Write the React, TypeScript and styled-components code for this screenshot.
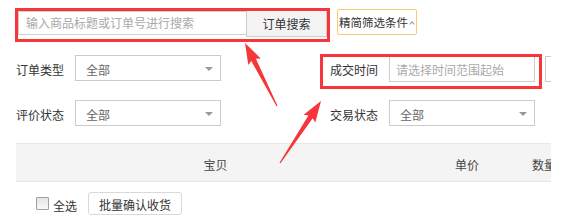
import React from "react";
import styled, { createGlobalStyle } from "styled-components";

const GlobalStyle = createGlobalStyle`
  html, body { margin: 0; padding: 0; background: #fff; }
  body {
    font-family: "Noto Sans CJK SC", "Noto Sans", "Liberation Sans", sans-serif;
    font-size: 12px;
    color: #333;
  }
  * { box-sizing: border-box; }
`;

const Page = styled.div`
  position: relative;
  width: 562px;
  height: 217px;
  overflow: hidden;
`;

const Content = styled.div`
  width: 551px;
  height: 217px;
  overflow: hidden;
`;

const SearchBar = styled.div`
  display: flex;
  align-items: flex-start;
  padding: 9px 0 0 18px;
`;

const SearchInput = styled.div`
  width: 228px;
  height: 24px;
  margin-top: 2px;
  border: 1px solid #cfcfcf;
  border-right: none;
  padding-left: 7px;
  display: flex;
  align-items: center;
  color: #a9a9a9;
  line-height: 1;
  white-space: nowrap;
`;

const SearchButton = styled.div`
  width: 81px;
  height: 28px;
  background: #f3f3f3;
  border: 1px solid #cccccc;
  display: flex;
  align-items: center;
  justify-content: center;
  color: #333;
  padding-top: 1px;
  white-space: nowrap;
`;

const ToggleButton = styled.div`
  margin-left: 10px;
  width: 80px;
  height: 26px;
  border: 1px solid #f7c976;
  border-radius: 2px;
  display: flex;
  align-items: center;
  padding-left: 1px;
  color: #333;
  white-space: nowrap;
  font-size: 11.5px;
  overflow: hidden;
`;

const Caret = styled.span`
  display: inline-block;
  flex-shrink: 0;
  width: 4px;
  height: 4px;
  border-left: 1px solid #999;
  border-top: 1px solid #999;
  transform: rotate(45deg);
  margin: 4px 0 0 2px;
`;

const FilterGrid = styled.div`
  display: grid;
  grid-template-columns: 314px auto;
  row-gap: 19px;
  padding-left: 16px;
  margin-top: 18px;
`;

const Field = styled.div`
  display: flex;
  align-items: center;
  height: 26px;
  white-space: nowrap;
`;

const Label = styled.div`
  width: 59px;
  color: #333;
  padding-top: 3px;
  flex-shrink: 0;
`;

const Select = styled.div`
  position: relative;
  width: 146px;
  height: 26px;
  border: 1px solid #cccccc;
  padding-left: 10px;
  display: flex;
  align-items: center;
  color: #666;
  padding-top: 3px;
  flex-shrink: 0;
`;

const Arrow = styled.span`
  position: absolute;
  right: 7px;
  top: 11px;
  width: 0;
  height: 0;
  border-left: 4px solid transparent;
  border-right: 4px solid transparent;
  border-top: 4px solid #999;
`;

const DateInput = styled.div<{ $offset?: number }>`
  width: 146px;
  height: 26px;
  margin-top: ${(p) => p.$offset ?? 0}px;
  border: 1px solid #cccccc;
  padding-left: 6px;
  display: flex;
  align-items: center;
  color: #aaa;
  flex-shrink: 0;
`;

const Dash = styled.span`
  width: 10px;
  text-align: center;
  color: #bbb;
  font-size: 10px;
`;

const TableHeader = styled.div`
  display: grid;
  grid-template-columns: 399px 104px 60px;
  margin: 17px 0 0 16px;
  width: 560px;
  height: 39px;
  background: #f4f4f4;
  border-top: 1px solid #e9e9e9;
  border-bottom: 1px solid #e6e6e6;
`;

const HeaderCell = styled.div<{ $align?: string }>`
  display: flex;
  align-items: center;
  justify-content: ${(p) => p.$align ?? "center"};
  padding-top: 4px;
  color: #444;
  white-space: nowrap;
  padding-left: ${(p) => (p.$align === "flex-start" ? "13px" : "0")};
`;

const BatchBar = styled.div`
  display: flex;
  align-items: center;
  margin-top: 10px;
  padding-left: 36px;
`;

const Checkbox = styled.span`
  width: 13px;
  height: 13px;
  border: 1px solid #a0a0a0;
  background: linear-gradient(#e4e4e4, #f8f8f8);
  border-radius: 1px;
`;

const CheckLabel = styled.span`
  margin-left: 4px;
  color: #333;
  padding-top: 3px;
`;

const BatchButton = styled.div`
  margin-left: 11px;
  width: 94px;
  height: 23px;
  border: 1px solid #d9d9d9;
  border-radius: 3px;
  background: #fff;
  display: flex;
  align-items: center;
  justify-content: center;
  color: #333;
  padding-top: 1px;
  white-space: nowrap;
`;

const Overlay = styled.svg`
  position: absolute;
  left: 0;
  top: 0;
  pointer-events: none;
`;

function arrowPoints(tip: [number, number], tail: [number, number]) {
  const dx = tail[0] - tip[0];
  const dy = tail[1] - tip[1];
  const len = Math.hypot(dx, dy);
  const ux = dx / len;
  const uy = dy / len;
  const px = -uy;
  const py = ux;
  const headLen = 21;
  const headHalf = 7;
  const shaftHalf = 2.6;
  const bx = tip[0] + ux * headLen;
  const by = tip[1] + uy * headLen;
  const pts: [number, number][] = [
    tip,
    [bx + px * headHalf, by + py * headHalf],
    [bx - ux * 2 + px * shaftHalf, by - uy * 2 + py * shaftHalf],
    [tail[0] + px * 0.6, tail[1] + py * 0.6],
    [tail[0] - px * 0.6, tail[1] - py * 0.6],
    [bx - ux * 2 - px * shaftHalf, by - uy * 2 - py * shaftHalf],
    [bx - px * headHalf, by - py * headHalf],
  ];
  return pts.map((p) => p.map((v) => v.toFixed(1)).join(",")).join(" ");
}

const RED = "#f5363a";

export default function App() {
  return (
    <>
      <GlobalStyle />
      <Page>
        <Content>
          <SearchBar>
            <SearchInput>输入商品标题或订单号进行搜索</SearchInput>
            <SearchButton>订单搜索</SearchButton>
            <ToggleButton>
              精简筛选条件
              <Caret />
            </ToggleButton>
          </SearchBar>
          <FilterGrid>
            <Field>
              <Label>订单类型</Label>
              <Select>
                全部
                <Arrow />
              </Select>
            </Field>
            <Field>
              <Label>成交时间</Label>
              <DateInput $offset={2}>请选择时间范围起始</DateInput>
              <Dash>-</Dash>
              <DateInput $offset={2} />
            </Field>
            <Field>
              <Label>评价状态</Label>
              <Select>
                全部
                <Arrow />
              </Select>
            </Field>
            <Field>
              <Label>交易状态</Label>
              <Select>
                全部
                <Arrow />
              </Select>
            </Field>
          </FilterGrid>
          <TableHeader>
            <HeaderCell>宝贝</HeaderCell>
            <HeaderCell>单价</HeaderCell>
            <HeaderCell $align="flex-start">数量</HeaderCell>
          </TableHeader>
          <BatchBar>
            <Checkbox />
            <CheckLabel>全选</CheckLabel>
            <BatchButton>批量确认收货</BatchButton>
          </BatchBar>
        </Content>
        <Overlay width={562} height={217} viewBox="0 0 562 217">
          <rect x={16.5} y={9.5} width={312} height={31} fill="none" stroke={RED} strokeWidth={3} />
          <rect x={321.5} y={55.5} width={219} height={32} fill="none" stroke={RED} strokeWidth={3} />
          <polygon points={arrowPoints([245, 43], [277, 106])} fill={RED} />
          <polygon points={arrowPoints([321, 101], [280, 163])} fill={RED} />
        </Overlay>
      </Page>
    </>
  );
}
